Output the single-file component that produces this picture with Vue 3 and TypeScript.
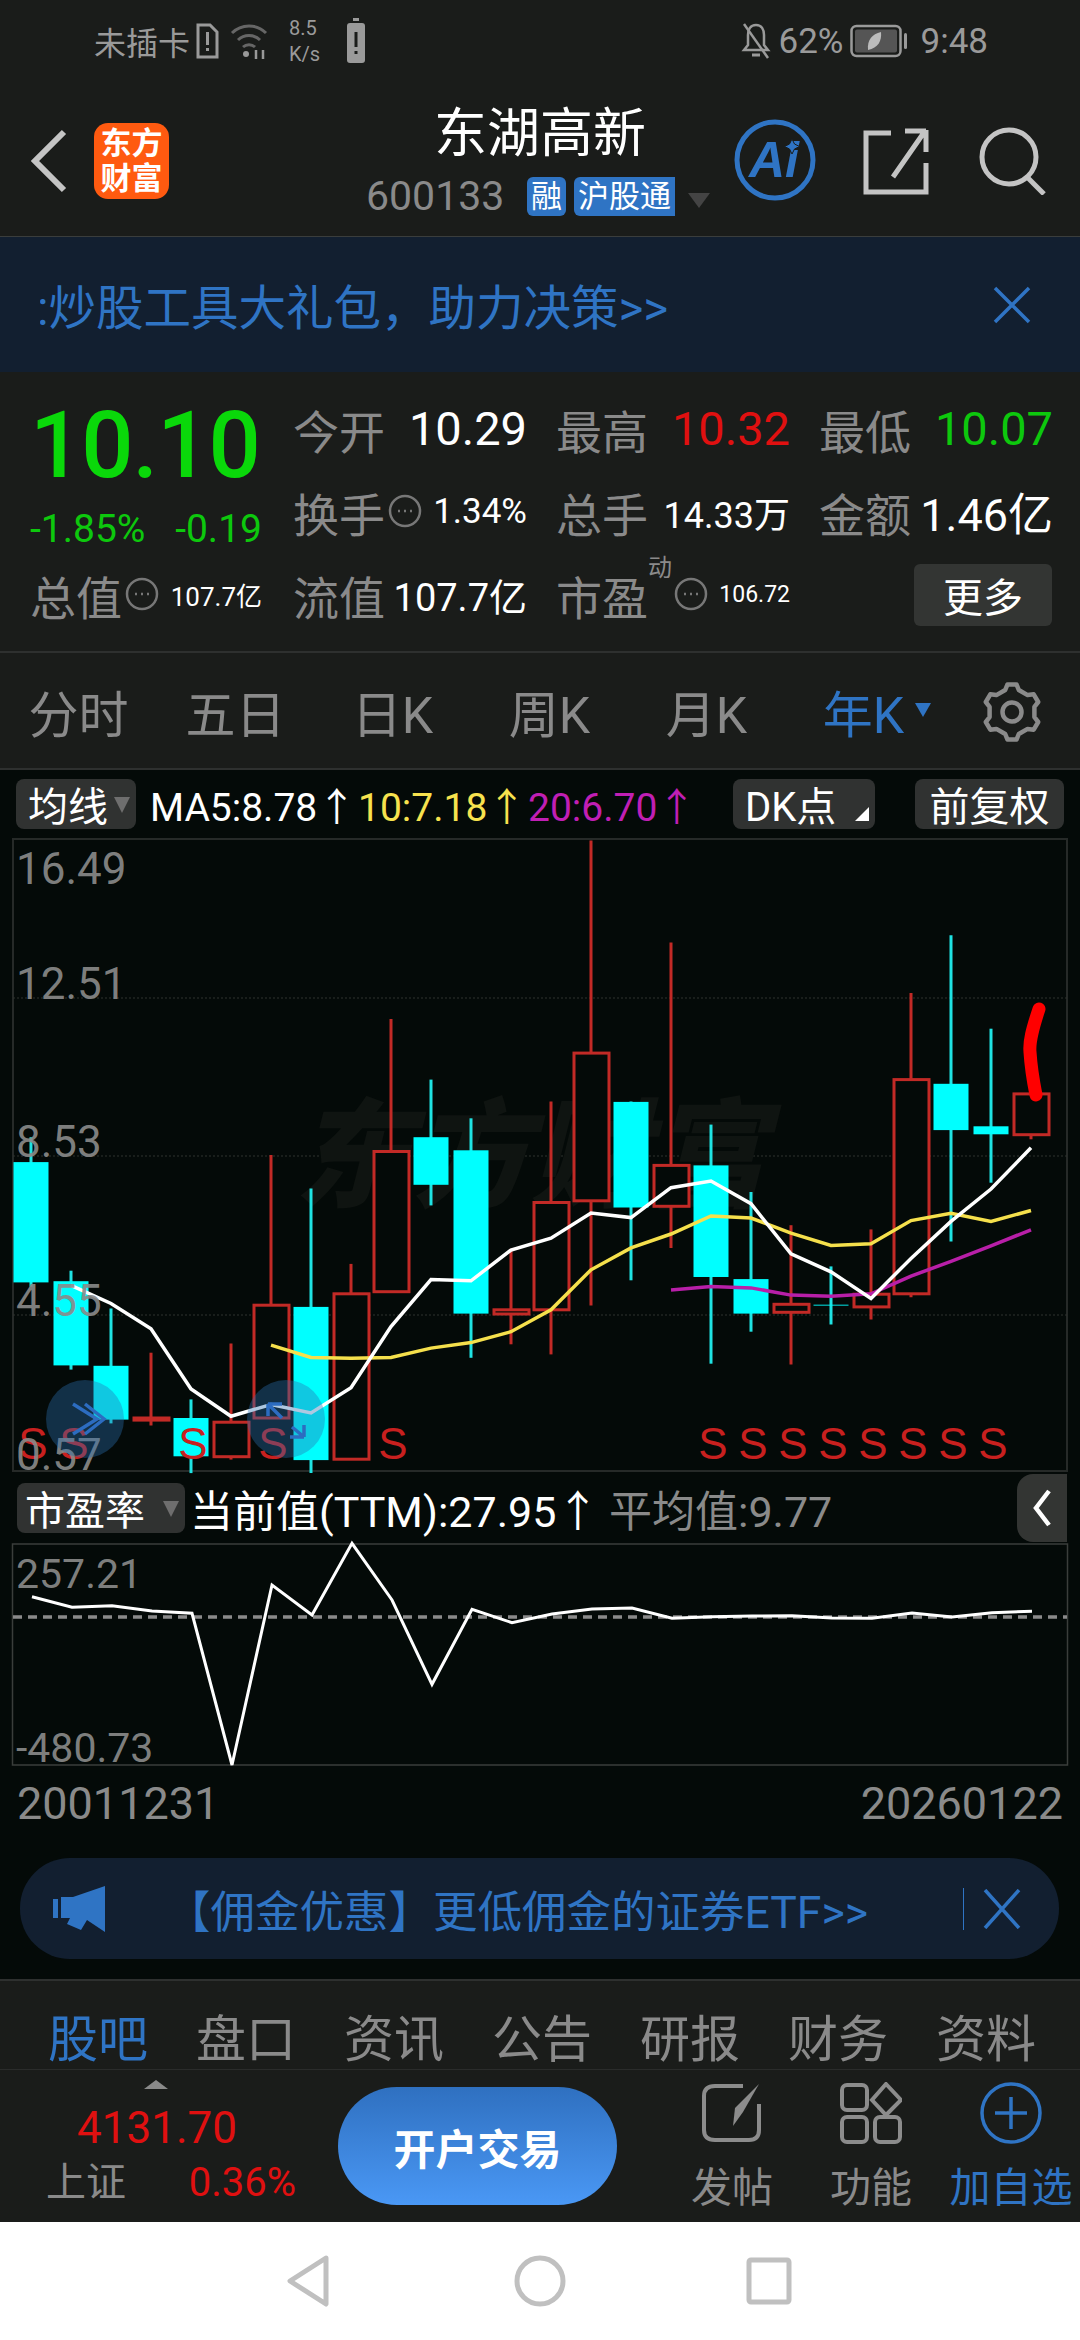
<script setup lang="ts">
type Candle = { hi: number; top: number; bot: number; lo: number; up: boolean }

// chart values are read off the reference crop, x/y helpers map them onto the page
const cx = (i: number) => 31 + i * 40
const py = (v: number) => +(830 + v / 2.376).toFixed(1)

const raw: [number, number, number, number, boolean][] = [
  [730, 789, 1075, 1085, false],
  [1047, 1072, 1272, 1282, false],
  [1137, 1273, 1401, 1410, false],
  [1242, 1397, 1402, 1415, true],
  [1353, 1397, 1488, 1528, false],
  [1220, 1407, 1489, 1496, true],
  [772, 1129, 1397, 1397, true],
  [852, 1133, 1497, 1528, false],
  [1031, 1102, 1495, 1495, true],
  [449, 764, 1097, 1097, true],
  [593, 730, 843, 892, false],
  [685, 761, 1149, 1254, false],
  [995, 1140, 1150, 1222, true],
  [645, 885, 1140, 1246, true],
  [25, 530, 881, 1130, true],
  [645, 646, 897, 1070, false],
  [267, 797, 894, 993, true],
  [700, 797, 1062, 1268, false],
  [860, 1067, 1149, 1192, false],
  [939, 1127, 1146, 1270, true],
  [1037, 1128, 1130, 1175, false],
  [949, 1103, 1133, 1163, true],
  [387, 593, 1102, 1110, true],
  [250, 603, 713, 978, false],
  [472, 704, 723, 838, false],
  [627, 627, 724, 735, true]
]

const candles: Candle[] = raw.map(([hi, top, bot, lo, up]) => ({
  hi: py(hi),
  top: py(top),
  bot: py(bot),
  lo: py(lo),
  up
}))

const line = (start: number, ys: number[]) =>
  ys.map((y, i) => `${cx(start + i)},${py(y)}`).join(' ')

const ma5 = line(1, [
  1082, 1125, 1185, 1328, 1393, 1365, 1385, 1325, 1180, 1068, 1071, 998, 970, 910, 921, 850, 834,
  888, 1007, 1050, 1113, 1018, 930, 853, 755
])
const ma10 = line(6, [
  1224, 1253, 1255, 1253, 1231, 1218, 1192, 1140, 1045, 993, 960, 917, 922, 958, 987, 983, 928, 911,
  930, 904
])
const ma20 = line(16, [1093, 1085, 1088, 1105, 1108, 1102, 1060, 1025, 988, 950])

const peLine = [
  380, 412, 407, 423, 430, 885, 345, 435, 220, 390, 643, 418, 458, 432, 417, 414, 445, 440, 438, 437,
  444, 445, 429, 441, 428, 424
]
  .map((y, i) => `${32 + i * 40},${(1470 + y / 3).toFixed(1)}`)
  .join(' ')

const axis = [
  { text: '16.49', y: 884 },
  { text: '12.51', y: 999 },
  { text: '8.53', y: 1157 },
  { text: '4.55', y: 1316 },
  { text: '0.57', y: 1470 }
]
const signals = [33, 74, 193, 273, 393, 713, 753, 793, 833, 873, 913, 953, 993]
const grid = [998, 1156, 1315]

const periods = ['分时', '五日', '日K', '周K', '月K']
const newsTabs = ['股吧', '盘口', '资讯', '公告', '研报', '财务', '资料']

const gear = (() => {
  const pts: string[] = []
  for (let i = 0; i < 6; i++) {
    const a = (i * Math.PI) / 3
    for (const [off, r] of [
      [-0.3, 23],
      [-0.16, 28],
      [0.16, 28],
      [0.3, 23]
    ]) {
      pts.push(`${(30 + r * Math.sin(a + off)).toFixed(1)},${(30 - r * Math.cos(a + off)).toFixed(1)}`)
    }
  }
  return pts.join(' ')
})()
</script>

<template>
  <div class="page">
    <header class="top">
      <div class="status">
        <span class="carrier">未插卡</span>
        <svg class="sim" viewBox="0 0 26 36" width="26" height="36">
          <path d="M4 2h12l7 7v25H4z" fill="none" stroke="#9a9a9a" stroke-width="3" />
          <rect x="12" y="9" width="3" height="13" fill="#9a9a9a" />
          <rect x="12" y="25" width="3" height="3" fill="#9a9a9a" />
        </svg>
        <svg class="wifi" viewBox="0 0 38 38" width="38" height="38">
          <g fill="none" stroke="#666" stroke-width="3">
            <path d="M2 11a24 24 0 0 1 34 0" />
            <path d="M8 18a16 16 0 0 1 22 0" />
            <path d="M13 25a9 9 0 0 1 12 0" />
          </g>
          <circle cx="16" cy="32" r="3" fill="#999" />
          <path d="M26 28v9M33 28v9" stroke="#999" stroke-width="2.5" />
        </svg>
        <span class="speed">8.5<br />K/s</span>
        <svg class="warn" viewBox="0 0 20 46" width="20" height="46">
          <rect x="7" y="0" width="6" height="3" fill="#9a9a9a" />
          <rect x="1" y="5" width="18" height="40" rx="3" fill="#9a9a9a" />
          <rect x="8.5" y="14" width="3" height="15" fill="#1a1c1a" />
          <rect x="8.5" y="33" width="3" height="3" fill="#1a1c1a" />
        </svg>
        <span class="status-fill"></span>
        <svg class="bell" viewBox="0 0 30 40" width="30" height="40">
          <path d="M15 4c-6 0-8 5-8 10v10l-4 5h24l-4-5V14c0-5-2-10-8-10z" fill="none" stroke="#9a9a9a" stroke-width="2.5" />
          <path d="M11 34h8" stroke="#9a9a9a" stroke-width="3" />
          <path d="M3 3l24 34" stroke="#9a9a9a" stroke-width="2.5" />
        </svg>
        <span class="pct">62%</span>
        <svg class="battery" viewBox="0 0 60 34" width="60" height="34">
          <rect x="1.5" y="2" width="49" height="30" rx="5" fill="none" stroke="#9a9a9a" stroke-width="2.5" />
          <rect x="5" y="5.5" width="42" height="23" rx="2" fill="#555" />
          <rect x="54" y="9" width="3" height="16" rx="1.5" fill="#9a9a9a" />
          <path d="M18 26c-1-10 4-16 13-18 1 9-3 16-13 18z" fill="#bbb" />
        </svg>
        <span class="clock">9:48</span>
      </div>

      <div class="nav-bar">
        <svg class="back" viewBox="0 0 38 64" width="38" height="64">
          <path d="M34 3L5 32l29 29" fill="none" stroke="#c4c4c4" stroke-width="6" />
        </svg>
        <div class="logo"><span>东方</span><span>财富</span></div>
        <div class="title">
          <div class="name">东湖高新</div>
          <div class="code-row">
            <span class="code">600133</span>
            <span class="badge rong">融</span>
            <span class="badge hk">沪股通</span>
            <i class="caret"></i>
          </div>
        </div>
        <svg class="ai" viewBox="0 0 84 84" width="84" height="84">
          <circle cx="42" cy="42" r="38" fill="none" stroke="#2f74c4" stroke-width="5" />
          <text x="16" y="59" class="ai-text">Ai</text>
          <path d="M59 21l2.500 5 5 2.500-5 2.500-2.500 5-2.500-5-5-2.500 5-2.500z" fill="#2f74c4" stroke="#1a1c1a" stroke-width="1" />
        </svg>
        <svg class="share" viewBox="0 0 66 68" width="66" height="68">
          <path d="M28 6H3v59h60V36" fill="none" stroke="#c4c4c4" stroke-width="5" />
          <path d="M42 4h21v0M63 3v22M62 4L30 50" fill="none" stroke="#c4c4c4" stroke-width="5" />
        </svg>
        <svg class="search" viewBox="0 0 68 68" width="68" height="68">
          <circle cx="30" cy="30" r="27" fill="none" stroke="#c4c4c4" stroke-width="5" />
          <path d="M48 50l17 17" stroke="#c4c4c4" stroke-width="5" />
        </svg>
      </div>
    </header>

    <section class="banner">
      <div class="banner-text"><span>:炒股工具大礼包，助力决策&gt;&gt;</span></div>
      <svg viewBox="0 0 38 38" width="38" height="38">
        <path d="M2 2l34 34M36 2L2 36" stroke="#2f74c4" stroke-width="3.5" />
      </svg>
    </section>

    <section class="quote">
      <div class="price-block">
        <div class="price">10.10</div>
        <div class="change"><span>-1.85%</span><span>-0.19</span></div>
      </div>
      <div class="cell"><span class="lab">今开</span><span class="val">10.29</span></div>
      <div class="cell"><span class="lab">最高</span><span class="val red">10.32</span></div>
      <div class="cell"><span class="lab">最低</span><span class="val green">10.07</span></div>

      <div class="cell">
        <span class="lab">换手</span>
        <svg class="dots" viewBox="0 0 34 34" width="34" height="34">
          <circle cx="17" cy="17" r="15" fill="none" stroke="#777" stroke-width="2.5" />
          <path d="M10 17h2M16 17h2M22 17h2" stroke="#777" stroke-width="2.5" />
        </svg>
        <span class="val mid">1.34%</span>
      </div>
      <div class="cell"><span class="lab">总手</span><span class="val mid2">14.33万</span></div>
      <div class="cell"><span class="lab">金额</span><span class="val big">1.46亿</span></div>

      <div class="cell first">
        <span class="lab">总值</span>
        <svg class="dots" viewBox="0 0 34 34" width="34" height="34">
          <circle cx="17" cy="17" r="15" fill="none" stroke="#777" stroke-width="2.5" />
          <path d="M10 17h2M16 17h2M22 17h2" stroke="#777" stroke-width="2.5" />
        </svg>
        <span class="val tiny">107.7亿</span>
      </div>
      <div class="cell"><span class="lab">流值</span><span class="val small">107.7亿</span></div>
      <div class="cell">
        <span class="lab pe-lab">市盈<sup>动</sup></span>
        <svg class="dots" viewBox="0 0 34 34" width="34" height="34">
          <circle cx="17" cy="17" r="15" fill="none" stroke="#777" stroke-width="2.5" />
          <path d="M10 17h2M16 17h2M22 17h2" stroke="#777" stroke-width="2.5" />
        </svg>
        <span class="val pe-val">106.72</span>
      </div>
      <div class="cell more-cell"><button class="more">更多</button></div>
    </section>

    <nav class="periods">
      <span v-for="p in periods" :key="p" class="period">{{ p }}</span>
      <span class="period active">年K<i class="mini-caret"></i></span>
      <svg class="gear" viewBox="0 0 60 60" width="60" height="60">
        <polygon :points="gear" fill="none" stroke="#8a8a8a" stroke-width="4.5" stroke-linejoin="round" />
        <circle cx="30" cy="30" r="9.5" fill="none" stroke="#8a8a8a" stroke-width="4.5" />
      </svg>
    </nav>

    <section class="kline">
      <div class="legend">
        <span class="pill avg">均线<i class="pill-caret"></i></span>
        <span class="ma white">MA5:8.78↑</span>
        <span class="ma yellow">10:7.18↑</span>
        <span class="ma purple">20:6.70↑</span>
        <span class="legend-fill"></span>
        <span class="pill dk">DK点<i class="corner"></i></span>
        <span class="pill fq">前复权</span>
      </div>

      <svg class="chart" viewBox="0 838 1080 634" width="1080" height="634">
        <rect x="13" y="839" width="1054" height="632" fill="none" stroke="#262a28" stroke-width="2" />
        <line
          v-for="g in grid"
          :key="g"
          x1="13"
          x2="1067"
          :y1="g"
          :y2="g"
          stroke="#2e322f"
          stroke-width="1"
          stroke-dasharray="2 2"
        />
        <text x="294" y="1198" class="watermark">东方财富</text>

        <g v-for="(c, i) in candles" :key="i">
          <line
            :x1="cx(i)"
            :x2="cx(i)"
            :y1="c.hi"
            :y2="c.lo"
            :stroke="c.up ? '#c22a26' : '#1fe3e3'"
            stroke-width="3"
          />
          <rect
            v-if="c.up"
            :x="cx(i) - 17"
            :y="c.top"
            width="35"
            :height="c.bot - c.top"
            fill="#040a08"
            stroke="#c22a26"
            stroke-width="3"
          />
          <rect v-else :x="cx(i) - 17.5" :y="c.top" width="35" :height="c.bot - c.top" fill="#00ffff" />
        </g>

        <polyline :points="ma20" class="ma-line" stroke="#b81fa8" />
        <polyline :points="ma10" class="ma-line" stroke="#f5e04c" />
        <polyline :points="ma5" class="ma-line" stroke="#ffffff" />

        <text v-for="(s, i) in signals" :key="i" :x="s" y="1459" class="signal">S</text>
        <text v-for="a in axis" :key="a.text" x="16" :y="a.y" class="axis">{{ a.text }}</text>

        <path
          d="M1039 1009C1032 1030 1029 1042 1030 1052C1031 1068 1033 1080 1036 1095"
          fill="none"
          stroke="#ff0000"
          stroke-width="13"
          stroke-linecap="round"
        />

        <circle cx="85" cy="1419" r="39" fill="#2a6fb0" fill-opacity="0.38" />
        <path d="M73 1404l24 15-24 15M85 1404l19 15-19 15" fill="none" stroke="#2c6cc0" stroke-width="3.5" />
        <circle cx="286" cy="1419" r="39" fill="#2a6fb0" fill-opacity="0.38" />
        <path
          d="M268 1404h14M268 1404v12M268 1404l14 14M304 1437h-14M304 1437v-12M304 1437l-12-10"
          fill="none"
          stroke="#2c6cc0"
          stroke-width="3.5"
        />
      </svg>

      <div class="sub-head">
        <span class="pill pe">市盈率<i class="pill-caret"></i></span>
        <span class="cur">当前值(TTM):27.95↑</span>
        <span class="mean">平均值:9.77</span>
        <span class="fold">
          <svg viewBox="0 0 20 40" width="20" height="40">
            <path d="M17 3L4 20l13 17" fill="none" stroke="#fff" stroke-width="4.5" />
          </svg>
        </span>
      </div>

      <svg class="sub-chart" viewBox="0 1543 1080 223" width="1080" height="223">
        <rect x="12.5" y="1544" width="1055" height="221" fill="none" stroke="#3a3e3b" stroke-width="1.5" />
        <line x1="13" x2="1067" y1="1617" y2="1617" stroke="#8a8a8a" stroke-width="3.5" stroke-dasharray="9 6" />
        <polyline :points="peLine" fill="none" stroke="#fff" stroke-width="3" />
        <text x="16" y="1588" class="axis narrow">257.21</text>
        <text x="16" y="1762" class="axis narrow">-480.73</text>
      </svg>

      <div class="dates"><span>20011231</span><span>20260122</span></div>

      <div class="promo">
        <svg class="horn" viewBox="0 0 54 46" width="54" height="46">
          <path d="M0 13h5v19H0zM8 11h12L52 0v46L34 34l-6 10-14-6 3-6H8z" fill="#2f74c4" />
        </svg>
        <span class="promo-text">【佣金优惠】更低佣金的证券ETF&gt;&gt;</span>
        <i class="promo-div"></i>
        <svg viewBox="0 0 38 40" width="38" height="40">
          <path d="M2 1l34 38M36 1L2 39" stroke="#2f74c4" stroke-width="3.5" />
        </svg>
      </div>
    </section>

    <section class="bottom">
      <div class="news-tabs">
        <span v-for="(t, i) in newsTabs" :key="t" class="news-tab" :class="{ active: i === 0 }">{{ t }}</span>
      </div>
      <div class="dock">
        <div class="index">
          <i class="up-tri"></i>
          <div class="index-val">4131.70</div>
          <div class="index-row"><span class="index-name">上证</span><span class="index-pct">0.36%</span></div>
        </div>
        <button class="trade">开户交易</button>
        <div class="tool">
          <svg viewBox="0 0 62 62" width="62" height="62">
            <path d="M42 4H14Q3 4 3 14v34q0 10 11 10h34q10 0 10-10V22" fill="none" stroke="#8c8c8c" stroke-width="4" />
            <path d="M58 2L42 30l-10 14 2-18z" fill="#8c8c8c" />
          </svg>
          <span>发帖</span>
        </div>
        <div class="tool">
          <svg viewBox="0 0 62 62" width="62" height="62">
            <g fill="none" stroke="#8c8c8c" stroke-width="4">
              <rect x="2" y="3" width="25" height="25" rx="5" />
              <path d="M46 2l15 16-15 15-14-15z" />
              <rect x="2" y="35" width="25" height="25" rx="5" />
              <rect x="35" y="35" width="25" height="25" rx="5" />
            </g>
          </svg>
          <span>功能</span>
        </div>
        <div class="tool add">
          <svg viewBox="0 0 62 62" width="62" height="62">
            <circle cx="31" cy="31" r="29" fill="none" stroke="#2f74c4" stroke-width="3.5" />
            <path d="M31 15v32M15 31h32" stroke="#2f74c4" stroke-width="3.5" />
          </svg>
          <span>加自选</span>
        </div>
      </div>
    </section>

    <footer class="sys-nav">
      <svg viewBox="0 0 46 54" width="46" height="54">
        <path d="M41 4L5 27l36 23z" fill="none" stroke="#c0c0c0" stroke-width="5" stroke-linejoin="round" />
      </svg>
      <svg viewBox="0 0 54 54" width="54" height="54">
        <circle cx="27" cy="27" r="23" fill="none" stroke="#c0c0c0" stroke-width="5" />
      </svg>
      <svg viewBox="0 0 48 50" width="48" height="50">
        <rect x="4" y="4" width="40" height="42" rx="2" fill="none" stroke="#c0c0c0" stroke-width="5" />
      </svg>
    </footer>
  </div>
</template>

<style scoped>
.page {
  width: 1080px;
  height: 2340px;
  overflow: hidden;
  background: #1a1c1a;
  font-family: Roboto, 'Noto Sans CJK SC', sans-serif;
  color: #8a8a8a;
}

.top {
  height: 236px;
}

.status {
  height: 76px;
  display: flex;
  align-items: center;
  padding: 6px 92px 0 94px;
  box-sizing: border-box;
  color: #9a9a9a;
  font-size: 32px;
}

.sim {
  margin-left: 4px;
}

.wifi {
  margin-left: 10px;
}

.speed {
  margin-left: 21px;
  width: 57px;
  font-size: 20px;
  line-height: 26px;
}

.status-fill {
  flex: 1;
}

.pct {
  margin-left: 8px;
  font-size: 35px;
}

.battery {
  margin-left: 6px;
}

.clock {
  margin-left: 11px;
  font-size: 35px;
}

.nav-bar {
  height: 160px;
  box-sizing: border-box;
  position: relative;
  display: flex;
  align-items: center;
  padding: 9px 0 0 30px;
}

.logo {
  width: 75px;
  height: 76px;
  margin-left: 26px;
  border-radius: 14px;
  background: #ff5a10;
  color: #fff;
  font-size: 31px;
  font-weight: 700;
  line-height: 35px;
  text-align: center;
  display: flex;
  flex-direction: column;
  justify-content: center;
}

.title {
  position: absolute;
  left: 0;
  top: 24px;
  width: 100%;
  text-align: center;
}

.name {
  color: #fff;
  font-size: 53px;
  line-height: 68px;
}

.code-row {
  position: absolute;
  left: 366px;
  top: 76px;
  display: flex;
  align-items: center;
  height: 40px;
}

.code {
  font-size: 41px;
  width: 161px;
  text-align: left;
}

.badge {
  height: 39px;
  background: #2f74c4;
  color: #fff;
  font-size: 31px;
  line-height: 39px;
  text-align: center;
}

.rong {
  width: 39px;
  border-radius: 6px;
  margin-right: 8px;
}

.hk {
  width: 101px;
  border-radius: 6px 0 0 6px;
  overflow: hidden;
  white-space: nowrap;
}

.caret {
  margin: 8px 0 0 13px;
  border-left: 11px solid transparent;
  border-right: 11px solid transparent;
  border-top: 15px solid #444;
}

.ai {
  position: absolute;
  left: 733px;
  top: 42px;
}

.ai-text {
  font: italic 700 50px 'Liberation Sans', sans-serif;
  fill: #2f74c4;
}

.share {
  position: absolute;
  left: 863px;
  top: 51px;
}

.search {
  position: absolute;
  left: 979px;
  top: 51px;
}

.banner {
  height: 136px;
  border-top: 1px solid #3a3d3c;
  box-sizing: border-box;
  background: #121f30;
  display: flex;
  align-items: center;
  justify-content: space-between;
  padding: 0 49px 0 40px;
}

.banner-text {
  width: 640px;
  overflow: hidden;
  color: #2f74c4;
  font-size: 47.5px;
  white-space: nowrap;
}

.banner-text span {
  margin-left: -3px;
}

.quote {
  height: 281px;
  box-sizing: border-box;
  padding-top: 15px;
  border-bottom: 2px solid #2e302f;
  display: grid;
  grid-template-columns: 293px repeat(3, 263px);
  grid-template-rows: repeat(3, 83px);
}

.price-block {
  grid-row: 1 / span 2;
  padding: 9px 0 0 30px;
}

.price {
  color: #0ad80a;
  font-size: 92px;
  font-weight: 500;
  line-height: 100px;
  letter-spacing: -1px;
}

.change {
  margin-top: 13px;
  width: 232px;
  display: flex;
  justify-content: space-between;
  color: #0dc80d;
  font-size: 39px;
  line-height: 40px;
}

.cell {
  display: flex;
  align-items: center;
  padding-right: 29px;
  white-space: nowrap;
}

.cell.first {
  padding-left: 30px;
  padding-right: 31px;
}

.lab {
  position: relative;
  font-size: 46px;
  color: #8a8a8a;
}

.lab sup {
  position: absolute;
  top: -8px;
  left: 92px;
  font-size: 24px;
  line-height: 28px;
}

.dots {
  margin: -2px 0 0 3px;
}

.pe-lab + .dots {
  margin-left: 26px;
}

.val {
  margin-left: auto;
  color: #fff;
  font-size: 47px;
}

.val.red {
  color: #e01010;
}

.val.green {
  color: #0dc80d;
}

.val.big {
  font-size: 45px;
}

.val.mid {
  font-size: 35px;
}

.val.mid2 {
  font-size: 36px;
}

.val.small {
  font-size: 38px;
}

.val.tiny {
  font-size: 26px;
}

.val.pe-val {
  font-size: 23px;
}

.more-cell {
  padding-right: 0;
}

.more {
  width: 138px;
  height: 62px;
  margin-left: 95px;
  border: none;
  border-radius: 6px;
  background: #333533;
  color: #fff;
  font: inherit;
  font-size: 40px;
  padding: 0;
}

.periods {
  height: 117px;
  border-bottom: 2px solid #2e302f;
  box-sizing: border-box;
  display: flex;
  align-items: center;
  position: relative;
}

.period {
  width: 157px;
  text-align: center;
  font-size: 50px;
  color: #8a8a8a;
  position: relative;
}

.period.active {
  color: #2f74c4;
}

.mini-caret {
  position: absolute;
  top: 28px;
  left: 130px;
  border-left: 8px solid transparent;
  border-right: 8px solid transparent;
  border-top: 14px solid #2f74c4;
}

.gear {
  position: absolute;
  left: 982px;
  top: 29px;
}

.kline {
  background: #040a08;
  height: 1209px;
}

.legend {
  height: 68px;
  display: flex;
  align-items: center;
  padding: 0 16px;
  box-sizing: border-box;
}

.pill {
  position: relative;
  display: inline-flex;
  align-items: center;
  background: #303231;
  border-radius: 8px;
  color: #fff;
  font-size: 40px;
  height: 50px;
  white-space: nowrap;
}

.avg {
  width: 120px;
  padding-left: 12px;
  box-sizing: border-box;
  margin-right: 14px;
}

.pill-caret {
  position: absolute;
  right: 6px;
  top: 18px;
  border-left: 8px solid transparent;
  border-right: 8px solid transparent;
  border-top: 16px solid #6e6e6e;
}

.ma {
  font-size: 39px;
  white-space: nowrap;
}

.white {
  color: #fff;
  width: 208px;
}

.yellow {
  color: #f7e24e;
  width: 170px;
}

.purple {
  color: #c01fb4;
}

.legend-fill {
  flex: 1;
}

.dk {
  width: 142px;
  padding-left: 12px;
  box-sizing: border-box;
  margin-right: 40px;
}

.corner {
  position: absolute;
  right: 6px;
  bottom: 8px;
  border-left: 14px solid transparent;
  border-bottom: 14px solid #fff;
}

.fq {
  width: 149px;
  justify-content: center;
}

.chart,
.sub-chart {
  display: block;
  overflow: visible;
}

.watermark {
  font-family: 'Noto Sans CJK SC', sans-serif;
  font-size: 118px;
  font-weight: 900;
  font-style: italic;
  fill: #0f1411;
}

.ma-line {
  fill: none;
  stroke-width: 3.5;
}

.signal {
  font-family: 'Liberation Sans', sans-serif;
  font-size: 44px;
  fill: #c8201f;
  text-anchor: middle;
}

.axis {
  font-family: Roboto, sans-serif;
  font-size: 44px;
  fill: #8a8a8a;
  fill-opacity: 0.92;
}

.axis.narrow {
  font-size: 41px;
}

.sub-head {
  height: 71px;
  position: relative;
  display: flex;
  align-items: center;
  padding-left: 17px;
  white-space: nowrap;
}

.pe {
  width: 168px;
  padding-left: 8px;
  box-sizing: border-box;
  margin-right: 5px;
}

.cur {
  width: 419px;
  color: #fff;
  font-size: 43px;
}

.mean {
  font-size: 43px;
  color: #8a8a8a;
}

.fold {
  position: absolute;
  right: 13px;
  top: 2px;
  width: 50px;
  height: 68px;
  border-radius: 16px 0 0 16px;
  background: #333533;
  display: flex;
  align-items: center;
  justify-content: center;
}

.dates {
  height: 92px;
  padding: 0 17px 18px;
  display: flex;
  justify-content: space-between;
  align-items: center;
  font-size: 45px;
  color: #8a8a8a;
  box-sizing: border-box;
}

.promo {
  height: 101px;
  margin: 0 21px 0 20px;
  border-radius: 50px;
  background: #121f30;
  display: flex;
  align-items: center;
  padding-left: 33px;
}

.promo-text {
  width: 797px;
  margin-left: 59px;
  font-size: 44.5px;
  color: #2f74c4;
  white-space: nowrap;
}

.promo-div {
  width: 1px;
  height: 42px;
  background: #2f74c4;
  margin-right: 19px;
}

.bottom {
  height: 243px;
  border-top: 2px solid #2e302f;
  box-sizing: border-box;
}

.news-tabs {
  height: 89px;
  border-bottom: 1px solid #2a2c2b;
  box-sizing: border-box;
  display: flex;
  padding: 29px 0 0 24px;
}

.news-tab {
  width: 148px;
  text-align: center;
  font-size: 50px;
  line-height: 60px;
  color: #8a8a8a;
}

.news-tab.active {
  color: #2f74c4;
}

.dock {
  height: 152px;
  position: relative;
  display: flex;
}

.index {
  width: 338px;
  position: relative;
}

.up-tri {
  position: absolute;
  left: 144px;
  top: 10px;
  border-left: 12px solid transparent;
  border-right: 12px solid transparent;
  border-bottom: 9px solid #8a8a8a;
}

.index-val {
  position: absolute;
  left: 0;
  width: 314px;
  top: 33px;
  text-align: center;
  color: #e01010;
  font-size: 44px;
  line-height: 50px;
}

.index-row {
  position: absolute;
  left: 46px;
  width: 250px;
  top: 88px;
  display: flex;
  justify-content: space-between;
  line-height: 50px;
}

.index-name {
  font-size: 40px;
  color: #8a8a8a;
}

.index-pct {
  font-size: 40px;
  color: #e01010;
}

.trade {
  width: 279px;
  height: 118px;
  margin-top: 17px;
  border: none;
  border-radius: 59px / 59px;
  background: linear-gradient(#2f70c0, #4a98f5);
  color: #fff;
  font: inherit;
  font-weight: 700;
  font-size: 42px;
  padding: 0;
}

.tool {
  position: absolute;
  top: 12px;
  width: 120px;
  text-align: center;
  display: flex;
  flex-direction: column;
  align-items: center;
  color: #8a8a8a;
  font-size: 41px;
  line-height: 50px;
  white-space: nowrap;
}

.tool svg {
  margin-bottom: 19px;
}

.tool:nth-child(3) {
  left: 672px;
}

.tool:nth-child(4) {
  left: 811px;
}

.tool.add {
  left: 951px;
  color: #2f74c4;
}

.sys-nav {
  height: 118px;
  background: #fff;
  display: flex;
  align-items: center;
  padding-left: 285px;
  box-sizing: border-box;
}

.sys-nav svg:nth-child(2) {
  margin-left: 182px;
}

.sys-nav svg:nth-child(3) {
  margin-left: 178px;
}
</style>
